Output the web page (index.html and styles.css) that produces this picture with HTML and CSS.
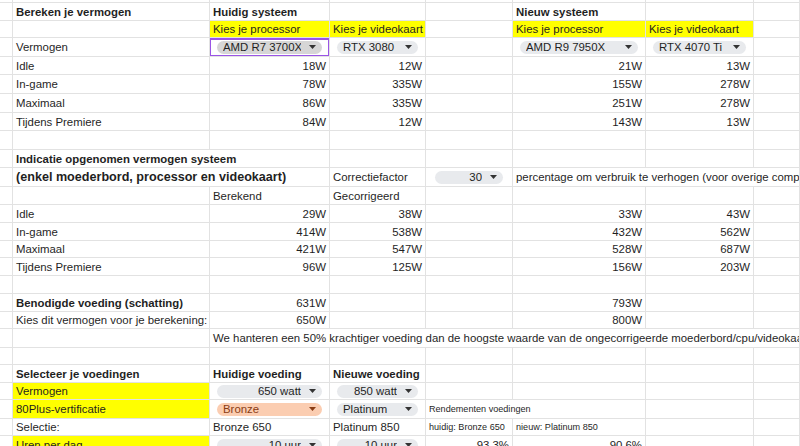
FILE: index.html
```html
<!DOCTYPE html>
<html lang="nl">
<head>
<meta charset="utf-8">
<title>Bereken je vermogen</title>
<link rel="stylesheet" href="styles.css">
</head>
<body>
<div class="sheet">
  <!-- row 0 -->
  <div class="c"></div><div class="c"></div><div class="c"></div><div class="c"></div><div class="c"></div><div class="c"></div><div class="c"></div><div class="c"></div>
  <!-- row 1 -->
  <div class="c"></div><div class="c b">Bereken je vermogen</div><div class="c b">Huidig systeem</div><div class="c"></div><div class="c"></div><div class="c b">Nieuw systeem</div><div class="c"></div><div class="c"></div>
  <!-- row 2 -->
  <div class="c"></div><div class="c"></div><div class="c y">Kies je processor</div><div class="c y">Kies je videokaart</div><div class="c"></div><div class="c y">Kies je processor</div><div class="c y">Kies je videokaart</div><div class="c"></div>
  <!-- row 3 -->
  <div class="c"></div><div class="c">Vermogen</div>
  <div class="c sel"><span class="chip chip-sel"><span class="t">AMD R7 3700X</span><svg class="caret" viewBox="0 0 7 4"><path d="M0 0h7L3.5 4z"/></svg></span></div>
  <div class="c"><span class="chip"><span class="t">RTX 3080</span><svg class="caret" viewBox="0 0 7 4"><path d="M0 0h7L3.5 4z"/></svg></span></div>
  <div class="c"></div>
  <div class="c"><span class="chip"><span class="t">AMD R9 7950X</span><svg class="caret" viewBox="0 0 7 4"><path d="M0 0h7L3.5 4z"/></svg></span></div>
  <div class="c"><span class="chip"><span class="t">RTX 4070 Ti</span><svg class="caret" viewBox="0 0 7 4"><path d="M0 0h7L3.5 4z"/></svg></span></div>
  <div class="c"></div>
  <!-- row 4 -->
  <div class="c"></div><div class="c">Idle</div><div class="c r">18W</div><div class="c r">12W</div><div class="c"></div><div class="c r">21W</div><div class="c r">13W</div><div class="c"></div>
  <!-- row 5 -->
  <div class="c"></div><div class="c">In-game</div><div class="c r">78W</div><div class="c r">335W</div><div class="c"></div><div class="c r">155W</div><div class="c r">278W</div><div class="c"></div>
  <!-- row 6 -->
  <div class="c"></div><div class="c">Maximaal</div><div class="c r">86W</div><div class="c r">335W</div><div class="c"></div><div class="c r">251W</div><div class="c r">278W</div><div class="c"></div>
  <!-- row 7 -->
  <div class="c"></div><div class="c">Tijdens Premiere</div><div class="c r">84W</div><div class="c r">12W</div><div class="c"></div><div class="c r">143W</div><div class="c r">13W</div><div class="c"></div>
  <!-- row 8 -->
  <div class="c"></div><div class="c"></div><div class="c"></div><div class="c"></div><div class="c"></div><div class="c"></div><div class="c"></div><div class="c"></div>
  <!-- row 9 -->
  <div class="c"></div><div class="c b span2">Indicatie opgenomen vermogen systeem</div><div class="c"></div><div class="c"></div><div class="c"></div><div class="c"></div><div class="c"></div>
  <!-- row 10 -->
  <div class="c"></div><div class="c b big span2">(enkel moederbord, processor en videokaart)</div><div class="c">Correctiefactor</div>
  <div class="c"><span class="chip chip-narrow"><span class="t tr">30</span><svg class="caret" viewBox="0 0 7 4"><path d="M0 0h7L3.5 4z"/></svg></span></div>
  <div class="c span3">percentage om verbruik te verhogen (voor overige componenten)</div>
  <!-- row 11 -->
  <div class="c"></div><div class="c"></div><div class="c">Berekend</div><div class="c">Gecorrigeerd</div><div class="c"></div><div class="c"></div><div class="c"></div><div class="c"></div>
  <!-- row 12 -->
  <div class="c"></div><div class="c">Idle</div><div class="c r">29W</div><div class="c r">38W</div><div class="c"></div><div class="c r">33W</div><div class="c r">43W</div><div class="c"></div>
  <!-- row 13 -->
  <div class="c"></div><div class="c">In-game</div><div class="c r">414W</div><div class="c r">538W</div><div class="c"></div><div class="c r">432W</div><div class="c r">562W</div><div class="c"></div>
  <!-- row 14 -->
  <div class="c"></div><div class="c">Maximaal</div><div class="c r">421W</div><div class="c r">547W</div><div class="c"></div><div class="c r">528W</div><div class="c r">687W</div><div class="c"></div>
  <!-- row 15 -->
  <div class="c"></div><div class="c">Tijdens Premiere</div><div class="c r">96W</div><div class="c r">125W</div><div class="c"></div><div class="c r">156W</div><div class="c r">203W</div><div class="c"></div>
  <!-- row 16 -->
  <div class="c"></div><div class="c"></div><div class="c"></div><div class="c"></div><div class="c"></div><div class="c"></div><div class="c"></div><div class="c"></div>
  <!-- row 17 -->
  <div class="c"></div><div class="c b">Benodigde voeding (schatting)</div><div class="c r">631W</div><div class="c"></div><div class="c"></div><div class="c r">793W</div><div class="c"></div><div class="c"></div>
  <!-- row 18 -->
  <div class="c"></div><div class="c">Kies dit vermogen voor je berekening:</div><div class="c r">650W</div><div class="c"></div><div class="c"></div><div class="c r">800W</div><div class="c"></div><div class="c"></div>
  <!-- row 19 -->
  <div class="c"></div><div class="c"></div><div class="c span6">We hanteren een 50% krachtiger voeding dan de hoogste waarde van de ongecorrigeerde moederbord/cpu/videokaart</div>
  <!-- row 20 -->
  <div class="c"></div><div class="c"></div><div class="c"></div><div class="c"></div><div class="c"></div><div class="c"></div><div class="c"></div><div class="c"></div>
  <!-- row 21 -->
  <div class="c"></div><div class="c b">Selecteer je voedingen</div><div class="c b">Huidige voeding</div><div class="c b">Nieuwe voeding</div><div class="c"></div><div class="c"></div><div class="c"></div><div class="c"></div>
  <!-- row 22 -->
  <div class="c"></div><div class="c y">Vermogen</div>
  <div class="c"><span class="chip"><span class="t tr">650 watt</span><svg class="caret" viewBox="0 0 7 4"><path d="M0 0h7L3.5 4z"/></svg></span></div>
  <div class="c"><span class="chip"><span class="t tr">850 watt</span><svg class="caret" viewBox="0 0 7 4"><path d="M0 0h7L3.5 4z"/></svg></span></div>
  <div class="c"></div><div class="c"></div><div class="c"></div><div class="c"></div>
  <!-- row 23 -->
  <div class="c"></div><div class="c y">80Plus-vertificatie</div>
  <div class="c"><span class="chip chip-bronze"><span class="t">Bronze</span><svg class="caret" viewBox="0 0 7 4"><path d="M0 0h7L3.5 4z"/></svg></span></div>
  <div class="c"><span class="chip"><span class="t">Platinum</span><svg class="caret" viewBox="0 0 7 4"><path d="M0 0h7L3.5 4z"/></svg></span></div>
  <div class="c s span2">Rendementen voedingen</div><div class="c"></div><div class="c"></div>
  <!-- row 24 -->
  <div class="c"></div><div class="c">Selectie:</div><div class="c">Bronze 650</div><div class="c">Platinum 850</div><div class="c s">huidig: Bronze 650</div><div class="c s">nieuw: Platinum 850</div><div class="c"></div><div class="c"></div>
  <!-- row 25 -->
  <div class="c"></div><div class="c y">Uren per dag</div>
  <div class="c"><span class="chip"><span class="t tr">10 uur</span><svg class="caret" viewBox="0 0 7 4"><path d="M0 0h7L3.5 4z"/></svg></span></div>
  <div class="c"><span class="chip"><span class="t tr">10 uur</span><svg class="caret" viewBox="0 0 7 4"><path d="M0 0h7L3.5 4z"/></svg></span></div>
  <div class="c r">93,3%</div><div class="c r">90,6%</div><div class="c"></div><div class="c"></div>
</div>
</body>
</html>
```

FILE: styles.css
```css
html, body {
  margin: 0;
  padding: 0;
  background: #ffffff;
  overflow: hidden;
}

body {
  font-family: "Liberation Sans", Arial, sans-serif;
  font-size: 11.4px;
  color: #1f1f1f;
}

.sheet {
  display: grid;
  grid-template-columns: 13px 197px 120px 96px 87px 133px 108px 1fr;
  grid-template-rows: 3px 18px 17px 19px 18px 19px 19px 18px 19px 18px 19px 18px 18px 18px 17px 18px 18px 18px 17px 19px 17px 18px 17px 19px 17px 19px;
  width: 800px;
}

.c {
  border-right: 1px solid #e2e2e2;
  border-bottom: 1px solid #e2e2e2;
  padding: 0 3px;
  display: flex;
  align-items: center;
  white-space: nowrap;
  overflow: hidden;
  min-width: 0;
  position: relative;
}

.r {
  justify-content: flex-end;
}

.b {
  font-weight: bold;
}

.big {
  font-size: 12.6px;
}

.y {
  background: #ffff00;
}

.s {
  font-size: 9.1px;
}

.span2 {
  grid-column: span 2;
}

.span3 {
  grid-column: span 3;
}

.span6 {
  grid-column: span 6;
}

.sel::after {
  content: "";
  position: absolute;
  left: -1px;
  top: 0;
  right: -1px;
  bottom: -1px;
  border: 2px solid #9a55e6;
  pointer-events: none;
}

.chip {
  flex: 1;
  min-width: 0;
  height: 13px;
  margin: 0 4px;
  padding: 0 6px 0 6px;
  border-radius: 7px;
  background: #e8eaed;
  display: flex;
  align-items: center;
  overflow: hidden;
}

.chip-narrow {
  margin: 0 6px;
}

.chip-sel {
  background: #d6d6d6;
}

.chip-bronze {
  background: #fbcdb1;
  color: #8a3c14;
}

.chip .t {
  flex: 1;
  overflow: hidden;
}

.chip .tr {
  text-align: right;
}

.caret {
  width: 7px;
  height: 4px;
  margin-left: 8px;
  flex: none;
  fill: #333333;
}

.chip-bronze .caret {
  fill: #8a3c14;
}
```
